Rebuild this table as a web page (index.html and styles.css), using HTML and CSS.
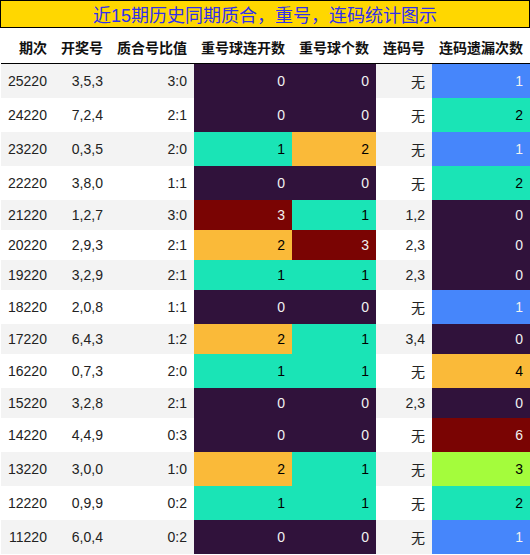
FILE: index.html
```html
<!DOCTYPE html>
<html>
<head lang="zh">
    <meta charset="UTF-8">
    <title>近15期历史同期质合，重号，连码统计图示</title>
    <link rel="stylesheet" href="styles.css">
</head>
<body>
<div class="title">近15期历史同期质合，重号，连码统计图示</div>
<table class="stats">
    <thead>
    <tr>
        <th>期次</th>
        <th>开奖号</th>
        <th>质合号比值</th>
        <th>重号球连开数</th>
        <th>重号球个数</th>
        <th>连码号</th>
        <th>连码遗漏次数</th>
    </tr>
    </thead>
    <tbody>
    <tr><td>25220</td><td>3,5,3</td><td>3:0</td><td class="c0">0</td><td class="c0">0</td><td>无</td><td class="c1">1</td></tr>
    <tr><td>24220</td><td>7,2,4</td><td>2:1</td><td class="c0">0</td><td class="c0">0</td><td>无</td><td class="c2">2</td></tr>
    <tr><td>23220</td><td>0,3,5</td><td>2:0</td><td class="c2">1</td><td class="c4">2</td><td>无</td><td class="c1">1</td></tr>
    <tr><td>22220</td><td>3,8,0</td><td>1:1</td><td class="c0">0</td><td class="c0">0</td><td>无</td><td class="c2">2</td></tr>
    <tr><td>21220</td><td>1,2,7</td><td>3:0</td><td class="c6">3</td><td class="c2">1</td><td>1,2</td><td class="c0">0</td></tr>
    <tr><td>20220</td><td>2,9,3</td><td>2:1</td><td class="c4">2</td><td class="c6">3</td><td>2,3</td><td class="c0">0</td></tr>
    <tr><td>19220</td><td>3,2,9</td><td>2:1</td><td class="c2">1</td><td class="c2">1</td><td>2,3</td><td class="c0">0</td></tr>
    <tr><td>18220</td><td>2,0,8</td><td>1:1</td><td class="c0">0</td><td class="c0">0</td><td>无</td><td class="c1">1</td></tr>
    <tr><td>17220</td><td>6,4,3</td><td>1:2</td><td class="c4">2</td><td class="c2">1</td><td>3,4</td><td class="c0">0</td></tr>
    <tr><td>16220</td><td>0,7,3</td><td>2:0</td><td class="c2">1</td><td class="c2">1</td><td>无</td><td class="c4">4</td></tr>
    <tr><td>15220</td><td>3,2,8</td><td>2:1</td><td class="c0">0</td><td class="c0">0</td><td>2,3</td><td class="c0">0</td></tr>
    <tr><td>14220</td><td>4,4,9</td><td>0:3</td><td class="c0">0</td><td class="c0">0</td><td>无</td><td class="c6">6</td></tr>
    <tr><td>13220</td><td>3,0,0</td><td>1:0</td><td class="c4">2</td><td class="c2">1</td><td>无</td><td class="c3">3</td></tr>
    <tr><td>12220</td><td>0,9,9</td><td>0:2</td><td class="c2">1</td><td class="c2">1</td><td>无</td><td class="c2">2</td></tr>
    <tr><td>11220</td><td>6,0,4</td><td>0:2</td><td class="c0">0</td><td class="c0">0</td><td>无</td><td class="c1">1</td></tr>
    </tbody>
</table>
</body>
</html>
```

FILE: styles.css
```css
* {
    margin: 0;
    padding: 0;
}

body {
    background-color: #fff;
    font-family: "Liberation Sans", "Noto Sans CJK SC", sans-serif;
    color: #222;
}

.title {
    border: 1px solid #000;
    background-color: #ffd700;
    color: #3030ee;
    font-size: 18px;
    text-align: center;
}

.stats {
    border-collapse: collapse;
    margin-left: 1px;
    font-size: 14px;
}

.stats th,
.stats td {
    padding: 7px;
    text-align: right;
    white-space: nowrap;
}

.stats th {
    font-weight: bold;
    color: #111;
    padding-top: 9px;
    padding-bottom: 6px;
    border-bottom: 1px solid #000;
}

.stats tbody tr:nth-child(odd) {
    background-color: #f3f3f3;
}

/* 颜色分级 */
.stats td.c0 {
    background-color: #30123b;
    color: #f1f1f1;
}

.stats td.c1 {
    background-color: #4686fb;
    color: #f1f1f1;
}

.stats td.c2 {
    background-color: #1ae4b6;
    color: #000;
}

.stats td.c3 {
    background-color: #a4fc3c;
    color: #000;
}

.stats td.c4 {
    background-color: #faba39;
    color: #000;
}

.stats td.c6 {
    background-color: #7a0403;
    color: #f1f1f1;
}
```
